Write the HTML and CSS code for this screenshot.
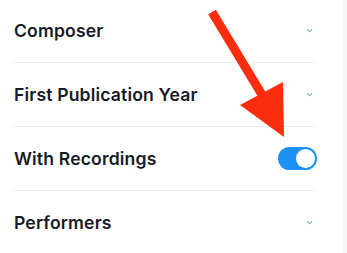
FILE: index.html
```html
<!DOCTYPE html>
<html>
<head>
<meta charset="utf-8">
<link rel="stylesheet" href="styles.css">
</head>
<body>
<div class="page">
  <div class="list">
    <div class="row"><span class="label">Composer</span><span class="chev"><svg width="7" height="5" viewBox="0 0 7 5"><path d="M1 1.2 L3.5 3.6 L6 1.2" fill="none" stroke="#8fb4e0" stroke-width="1.2"/></svg></span></div>
    <div class="row"><span class="label">First Publication Year</span><span class="chev"><svg width="7" height="5" viewBox="0 0 7 5"><path d="M1 1.2 L3.5 3.6 L6 1.2" fill="none" stroke="#8fb4e0" stroke-width="1.2"/></svg></span></div>
    <div class="row"><span class="label">With Recordings</span><span class="toggle"><span class="knob"></span></span></div>
    <div class="row last"><span class="label">Performers</span><span class="chev"><svg width="7" height="5" viewBox="0 0 7 5"><path d="M1 1.2 L3.5 3.6 L6 1.2" fill="none" stroke="#8fb4e0" stroke-width="1.2"/></svg></span></div>
  </div>
  <div class="strip"></div>
  <svg class="arrow" width="347" height="253" viewBox="0 0 347 253">
    <line x1="212" y1="12" x2="264" y2="98" stroke="#fb2d0f" stroke-width="9"/>
    <polygon points="240,105 283,82 284,137" fill="#fb2d0f"/>
  </svg>
</div>
</body>
</html>
```
FILE: styles.css
```css
html, body { margin: 0; padding: 0; background: #fff; }
.page {
  position: relative;
  width: 347px;
  height: 253px;
  overflow: hidden;
  display: flex;
}
.list {
  width: 300px;
  margin-left: 14px;
  margin-top: -1px;
}
.row {
  height: 63px;
  border-bottom: 1px solid #ebedf0;
  display: flex;
  align-items: center;
  justify-content: space-between;
}
.row.last { border-bottom: none; }
.label {
  font-family: "Inter", "Roboto", sans-serif;
  font-weight: 600;
  font-size: 17.6px;
  color: #181b26;
  letter-spacing: 0.15px;
}
.chev {
  display: flex;
  margin-right: 1px;
}
.toggle {
  width: 39px;
  height: 23px;
  border-radius: 12px;
  background: #1e8ff5;
  display: flex;
  justify-content: flex-end;
  align-items: center;
  box-sizing: border-box;
  padding-right: 2px;
  margin-right: -3px;
}
.knob {
  width: 19px;
  height: 19px;
  border-radius: 50%;
  background: #fff;
}
.strip {
  position: absolute;
  right: 0;
  top: 0;
  width: 4px;
  height: 253px;
  background: #f7f7f9;
}
.arrow {
  position: absolute;
  left: 0;
  top: 0;
}
```
